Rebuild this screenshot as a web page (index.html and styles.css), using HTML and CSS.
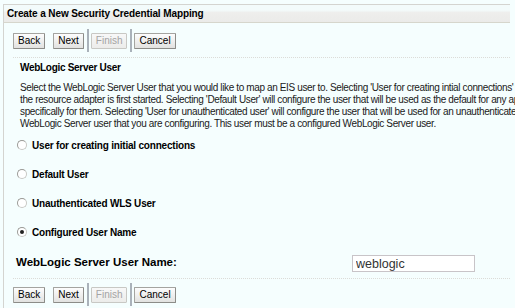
FILE: index.html
```html
<!DOCTYPE html>
<html lang="en">
<head>
    <meta charset="UTF-8">
    <title>Create a New Security Credential Mapping</title>
    <link rel="stylesheet" href="styles.css">
</head>
<body>
    <div class="panel">
        <div class="panel-head">Create a New Security Credential Mapping</div>

        <div class="train">
            <button class="btn">Back</button>
            <button class="btn">Next</button>
            <span class="sep"></span>
            <button class="btn" disabled>Finish</button>
            <span class="sep"></span>
            <button class="btn">Cancel</button>
        </div>

        <div class="section">
            <h2>WebLogic Server User</h2>
            <p class="help">
                Select the WebLogic Server User that you would like to map an EIS user to. Selecting 'User for creating intial connections' will<br>
                the resource adapter is first started. Selecting 'Default User' will configure the user that will be used as the default for any app<br>
                specifically for them. Selecting 'User for unauthenticated user' will configure the user that will be used for an unauthenticated<br>
                WebLogic Server user that you are configuring. This user must be a configured WebLogic Server user.
            </p>

            <div class="choices">
                <label class="choice"><input type="radio" name="user"> User for creating initial connections</label>
                <label class="choice"><input type="radio" name="user"> Default User</label>
                <label class="choice"><input type="radio" name="user"> Unauthenticated WLS User</label>
                <label class="choice"><input type="radio" name="user" checked> Configured User Name</label>
            </div>

            <div class="field">
                <label class="field-label">WebLogic Server User Name:</label>
                <input class="text-input" type="text" value="weblogic">
            </div>
        </div>

        <div class="train bottom">
            <button class="btn">Back</button>
            <button class="btn">Next</button>
            <span class="sep"></span>
            <button class="btn" disabled>Finish</button>
            <span class="sep"></span>
            <button class="btn">Cancel</button>
        </div>
    </div>
</body>
</html>
```

FILE: styles.css
```css
* {
    margin: 0;
    padding: 0;
    box-sizing: border-box;
}

body {
    font-family: 'Liberation Sans', Arial, sans-serif;
    font-size: 10px;
    color: #000;
    background: #f5fefe;
    overflow: hidden;
    height: 308px;
}

.panel {
    margin: 4px 0 0 3px;
    width: 507px;
    height: 304px;
    border-top: 1px solid #d4d4d0;
    border-left: 1px solid #d4d4d0;
}

.panel-head {
    height: 18px;
    padding-left: 3px;
    line-height: 17px;
    font-weight: bold;
    font-size: 10px;
    letter-spacing: -0.1px;
    background: linear-gradient(#f3fbfb 0%, #f3fbfb 30%, #eeeeec 45%, #ebebe9 100%);
    border-bottom: 1px solid #d6d6cc;
}

/* button row, used above and below the form */
.train {
    display: flex;
    align-items: flex-start;
    padding: 10px 0 0 9px;
    height: 34px;
}

.train.bottom {
    padding-top: 8px;
}

.btn {
    height: 16px;
    padding: 0 4px;
    margin-right: 8px;
    font-family: 'Liberation Sans', Arial, sans-serif;
    font-size: 10px;
    line-height: 14px;
    color: #000;
    background: linear-gradient(#fdfdfd, #e2e2e0);
    border: 1px solid #a4a4a0;
    border-right-color: #8c8c88;
    border-bottom-color: #8c8c88;
    border-radius: 1px;
}

.btn:disabled {
    color: #a4a4a4;
    background: linear-gradient(#f8f8f8, #ececea);
    border-color: #c8c8c4;
}

.sep {
    width: 2px;
    height: 23px;
    margin: -4px 2px 0 -5px;
    background: #aab2ba;
}

.section {
    margin-left: 9px;
    border-top: 1px dotted #dcdcd8;
    border-bottom: 1px dotted #dcdcd8;
    padding: 3px 0 6px 7px;
}

h2 {
    font-size: 10px;
    font-weight: bold;
    line-height: 14px;
    letter-spacing: -0.3px;
    margin-bottom: 7px;
}

/* the help text runs past the right edge of the window */
.help {
    font-size: 10px;
    line-height: 12px;
    letter-spacing: -0.37px;
    white-space: nowrap;
    color: #1a1a1a;
}

.choices {
    display: flex;
    flex-direction: column;
    gap: 15px;
    margin: 8px 0 0 -3px;
}

.choice {
    display: flex;
    align-items: center;
    gap: 5px;
    font-weight: bold;
    font-size: 10px;
    letter-spacing: -0.2px;
    height: 14px;
}

.choice input {
    appearance: none;
    width: 10px;
    height: 10px;
    border-radius: 50%;
    border: 1px solid #9a9a96;
    border-bottom-color: #c8c8c4;
    border-right-color: #c8c8c4;
    background: #fff;
    position: relative;
}

.choice input:checked::after {
    content: '';
    position: absolute;
    left: 2px;
    top: 2px;
    width: 4px;
    height: 4px;
    border-radius: 50%;
    background: #222;
}

.field {
    display: flex;
    align-items: center;
    margin: 16px 0 0 -4px;
}

.field-label {
    width: 336px;
    font-weight: bold;
    font-size: 11.5px;
    margin-top: -3px;
}

.text-input {
    width: 123px;
    height: 17px;
    padding: 0 3px;
    font-family: 'Liberation Sans', Arial, sans-serif;
    font-size: 12.5px;
    color: #333;
    background: #fff;
    border: 1px solid #c8c4c8;
}
```
